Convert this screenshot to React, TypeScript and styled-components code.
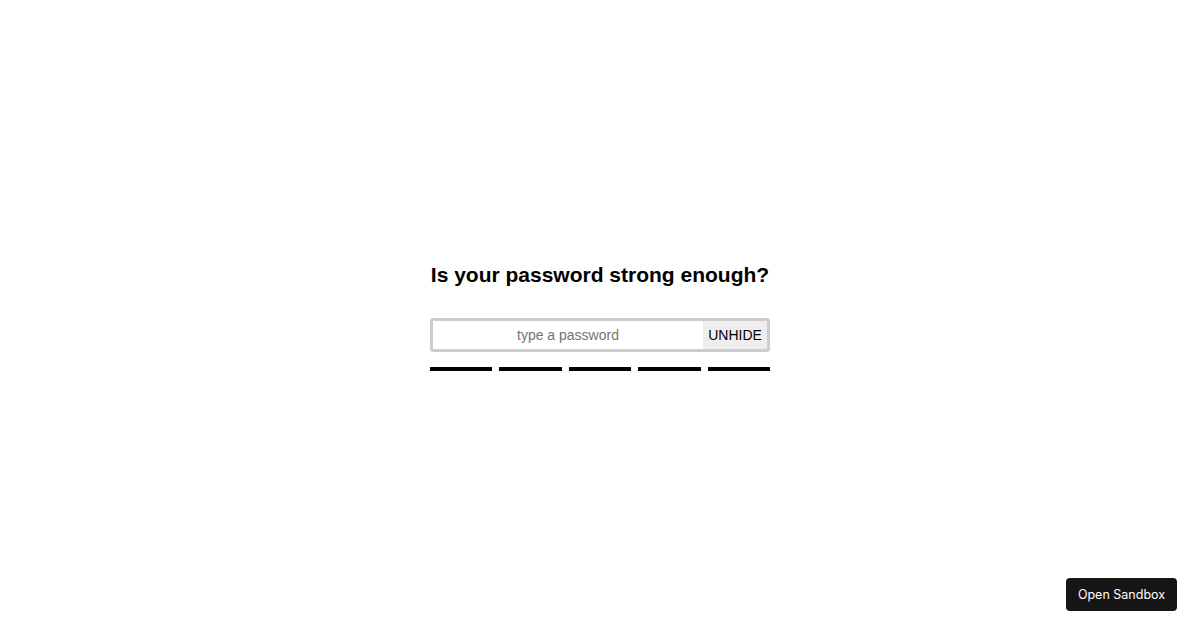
import { FC, useState } from "react";
import styled, { createGlobalStyle } from "styled-components";

const GlobalStyle = createGlobalStyle`
    html, body {
        margin: 0;
        padding: 0;
        background: #fff;
        font-family: "Liberation Sans", Arial, sans-serif;
    }
`

const BARS = [0, 1, 2, 3, 4]

const App: FC = () => {
    const [hidden, setHidden] = useState(true)
    const [value, setValue] = useState("")

    return (
        <>
            <GlobalStyle />
            <Page>
                <Box>
                    <Title>Is your password strong enough?</Title>
                    <Field>
                        <Input
                            type={hidden ? "password" : "text"}
                            placeholder="type a password"
                            value={value}
                            onChange={e => setValue(e.target.value)}
                        />
                        <Toggle onClick={() => setHidden(!hidden)}>
                            {hidden ? "UNHIDE" : "HIDE"}
                        </Toggle>
                    </Field>
                    <Meter>
                        {BARS.map(i => <Bar key={i} />)}
                    </Meter>
                </Box>
            </Page>
            <SandboxButton>Open Sandbox</SandboxButton>
        </>
    )
}

export default App


const Page = styled.div`
    height: 630px;
    display: flex;
    align-items: center;
    justify-content: center;
`

const Box = styled.div`
    width: 340px;
    display: flex;
    flex-direction: column;
    margin-top: 2px;
`

const Title = styled.h2`
    margin: 0 0 31px;
    font-size: 21px;
    line-height: 25px;
    font-weight: bold;
    color: #000;
    text-align: center;
    white-space: nowrap;
`

const Field = styled.div`
    display: flex;
    height: 34px;
    box-sizing: border-box;
    border: 3px solid #ccc;
    border-radius: 3px;
`

const Input = styled.input`
    flex: 1;
    min-width: 0;
    border: none;
    outline: none;
    padding: 0 4px;
    font-family: "Liberation Sans", Arial, sans-serif;
    font-size: 14px;
    text-align: center;
    color: #000;
    background: #fff;
    &::placeholder {
        color: #757575;
    }
`

const Toggle = styled.button`
    width: 64px;
    border: none;
    padding: 0;
    background: #eee;
    font-family: "Liberation Sans", Arial, sans-serif;
    font-size: 14px;
    color: #000;
    cursor: pointer;
`

const Meter = styled.div`
    display: grid;
    grid-template-columns: repeat(5, 1fr);
    column-gap: 7px;
    margin-top: 15px;
`

const Bar = styled.div`
    height: 4px;
    background: #000;
`

const SandboxButton = styled.button`
    position: fixed;
    right: 23px;
    bottom: 19px;
    width: 111px;
    height: 33px;
    border: none;
    border-radius: 4px;
    background: #151515;
    color: #fff;
    font-family: Inter, "Liberation Sans", sans-serif;
    font-size: 12.5px;
    cursor: pointer;
`
